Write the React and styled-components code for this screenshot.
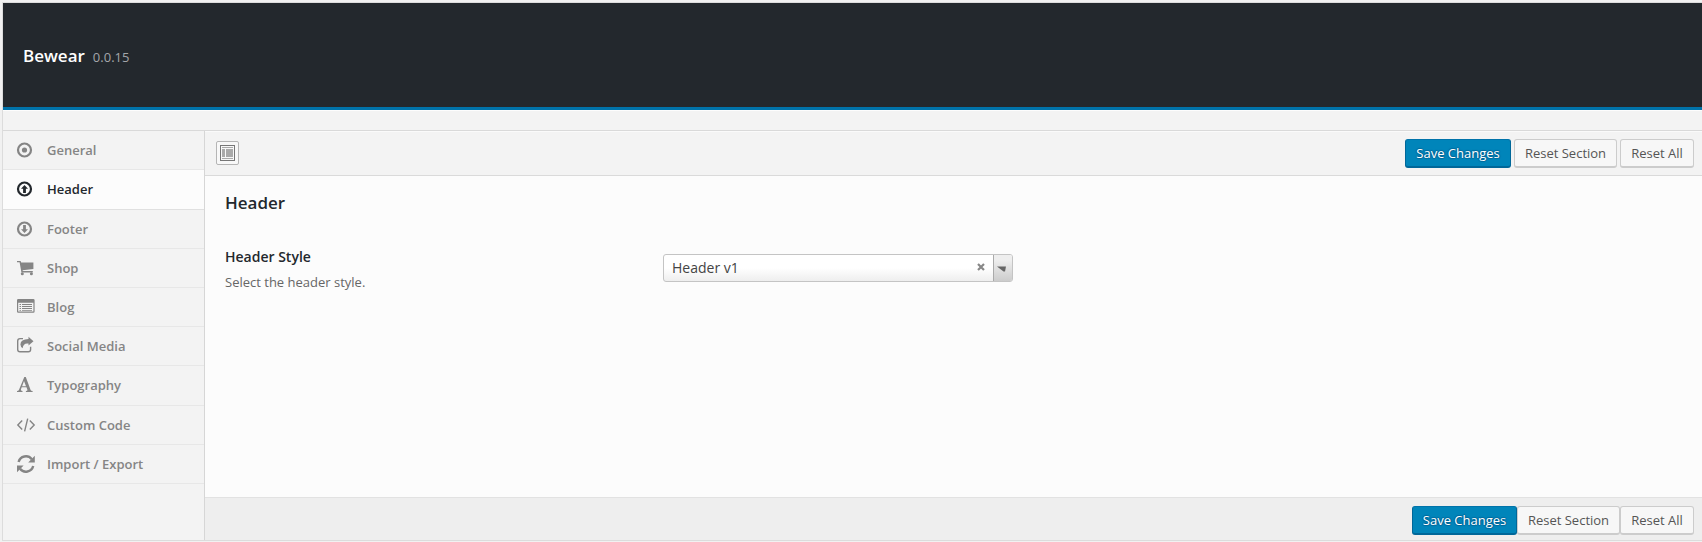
import React from "react";
import styled, { createGlobalStyle, css } from "styled-components";

const GlobalStyle = createGlobalStyle`
  * { box-sizing: border-box; }
  body { margin: 0; background: #f1f1f1; font-family: "Open Sans", sans-serif; color: #23282d; }
  button { font-family: inherit; }
`;

const Page = styled.div`
  height: 542px;
  padding: 2px 0 1px 2px;
  overflow: hidden;
`;

const Panel = styled.div`
  display: flex;
  flex-direction: column;
  height: 539px;
  border: 1px solid #dcdcdc;
  border-right: 0;
  background: #f3f3f3;
`;

const Masthead = styled.header`
  display: flex;
  align-items: baseline;
  flex: 0 0 107px;
  padding: 35px 20px 0;
  background: #23282d;
  border-bottom: 3px solid #0073aa;
`;

const Brand = styled.h1`
  margin: 0;
  font-size: 17px;
  line-height: 36px;
  font-weight: 600;
  color: #fff;
`;

const Version = styled.span`
  margin-left: 8px;
  font-size: 13px;
  color: #a3a6a9;
`;

const Strip = styled.div`
  flex: 0 0 21px;
  border-top: 1px solid #fdfdfd;
  border-bottom: 1px solid #d9d9d9;
`;

const Body = styled.div`
  display: flex;
  flex: 1;
`;

const Sidebar = styled.nav`
  flex: 0 0 202px;
  border-right: 1px solid #d6d6d6;
`;

const NavItem = styled.a`
  display: flex;
  align-items: flex-start;
  height: ${(p) => p.$height}px;
  padding: 9px 13px 0;
  border-bottom: 1px solid #e7e7e7;
  font-size: 13px;
  line-height: 20px;
  font-weight: 600;
  color: #858585;
  ${(p) => p.$active && css`
    background: #fcfcfc;
    color: #23282d;
    border-bottom-color: #e0e0e0;
  `}
`;

const NavIcon = styled.svg`
  flex: none;
  width: 20px;
  height: 20px;
  margin-right: 11px;
  fill: currentColor;
`;

const Main = styled.main`
  display: flex;
  flex-direction: column;
  flex: 1;
`;

const Toolbar = styled.div`
  display: flex;
  align-items: flex-start;
  justify-content: space-between;
  flex: 0 0 45px;
  padding: 7px 8px 0 11px;
  border-top: 1px solid #fafafa;
  border-bottom: 1px solid #dadada;
`;

const FooterBar = styled.div`
  display: flex;
  justify-content: flex-end;
  flex: 0 0 43px;
  padding: 8px 8px 0;
  background: #eee;
  border-top: 1px solid #e2e2e2;
`;

const ExpandButton = styled.button`
  display: flex;
  align-items: center;
  justify-content: center;
  width: 23px;
  height: 24px;
  margin-top: 2px;
  padding: 0;
  background: #f8f8f8;
  border: 1px solid #b5b5b5;
  border-radius: 2px;
`;

const Actions = styled.div`
  display: flex;
  gap: ${(p) => p.$gap}px;
`;

const Button = styled.button`
  width: ${(p) => p.$width}px;
  height: 29px;
  padding: 0;
  border: 1px solid #ccc;
  border-bottom-width: 2px;
  border-radius: 3px;
  background: #f7f7f7;
  font-size: 13px;
  line-height: 26px;
  white-space: nowrap;
  color: #555;
  ${(p) => p.$primary && css`
    background: #0085ba;
    border-color: #0073aa #006799 #006799;
    color: #fff;
    text-shadow: 0 -1px 1px #006799, 1px 0 1px #006799, 0 1px 1px #006799, -1px 0 1px #006799;
  `}
`;

const Content = styled.section`
  flex: 1;
  padding: 15px 20px 0;
  background: #fcfcfc;
`;

const Title = styled.h2`
  margin: 0;
  font-size: 17px;
  line-height: 23px;
  font-weight: 600;
`;

const Field = styled.div`
  display: flex;
  padding-top: 32px;
`;

const FieldInfo = styled.div`
  width: 438px;
  padding-top: 1px;
`;

const FieldLabel = styled.div`
  font-size: 14px;
  line-height: 19px;
  font-weight: 600;
`;

const FieldHint = styled.div`
  margin-top: 6px;
  font-size: 13px;
  line-height: 20px;
  color: #666;
`;

const Select = styled.div`
  display: flex;
  align-items: center;
  width: 350px;
  height: 28px;
  margin-top: 8px;
  padding-left: 8px;
  border: 1px solid #c4c4c4;
  border-radius: 3px;
  background: linear-gradient(#fff 50%, #eee);
  font-size: 14px;
  color: #444;
`;

const SelectValue = styled.span`
  flex: 1;
  line-height: 19px;
  padding-bottom: 1px;
`;

const SelectClear = styled.svg`
  width: 8px;
  height: 8px;
  margin: 0 8px 2px 0;
`;

const SelectArrow = styled.span`
  display: flex;
  align-items: center;
  width: 19px;
  height: 100%;
  padding: 1px 0 0 3px;
  border-left: 1px solid #aaa;
  border-radius: 0 2px 2px 0;
  background: linear-gradient(#eee 20%, #ccc);
`;

/* Every navigation glyph sits in a 20 x 20 box. */
const glyphs = {
  general: (
    <>
      <circle cx="8.5" cy="10" r="6.5" fill="none" stroke="currentColor" strokeWidth="2.2" />
      <circle cx="8.5" cy="10" r="2.6" />
    </>
  ),
  header: (
    <>
      <circle cx="8.5" cy="10" r="6.5" fill="none" stroke="currentColor" strokeWidth="2.2" />
      <path d="M8.5 6 12 9.8H9.9V14H7.1V9.8H5z" />
    </>
  ),
  footer: (
    <>
      <circle cx="8.5" cy="10" r="6.5" fill="none" stroke="currentColor" strokeWidth="2.2" />
      <path d="M8.5 14 12 10.2H9.9V6H7.1v4.2H5z" />
    </>
  ),
  shop: (
    <>
      <path d="M1 3h3.6l.6 1.5H17.4V11L6.6 12.3l.2.8h10V14.4H5.4L3.6 4.2H1z" />
      <circle cx="6.3" cy="15.7" r="1.5" />
      <circle cx="15.4" cy="15.7" r="1.5" />
    </>
  ),
  blog: (
    <g transform="translate(0 -1)">
      <path fillRule="evenodd" d="M2.3 3h15q1.300 0 1.300 1.300v11.200q0 1.300-1.300 1.300H2.300Q1 16.800 1 15.500V4.300Q1 3 2.300 3zM2.200 6.800v8.800h15.200V6.800z" />
      <path d="M3.500 8h1.500v1H3.500zM6 8h10v1H6zM3.500 10h1.500v1H3.500zM6 10h10v1H6zM3.500 12h1.500v1H3.500zM6 12h10v1H6zM3.500 14h1.500v.7H3.500zM6 14h10v.7H6z" />
    </g>
  ),
  social: (
    <g transform="translate(0 -.8)">
      <path d="M7 3.400H4Q1.700 3.400 1.700 5.700v8.500q0 2.300 2.300 2.300h8.300q2.300 0 2.300-2.300V11.500" fill="none" stroke="currentColor" strokeWidth="1.400" />
      <path d="M12.500 1.600 17.500 6l-5 4.400V8.300Q7.300 7.500 6.600 13 4.600 11.800 4.400 9.300 4.600 4 12.500 3.900z" />
    </g>
  ),
  typography: (
    <path fillRule="evenodd" d="M8.300 2h1.500l4.800 13q.4 1 2 1.100v1H9.900v-1q1.900-.1 1.500-1.300l-.9-2.500H5.700l-.8 2.300q-.4 1.300 1.600 1.500v1H1v-1q1.500-.2 2-1.400zM8 5.900 6.100 11.200H10z" />
  ),
  code: (
    <path d="M6.200 5.400 1.800 10l4.400 4.600M13.800 5.400 18.200 10l-4.400 4.600M11.700 3.700 8.600 16.300" fill="none" stroke="currentColor" strokeWidth="1.400" />
  ),
  sync: (
    <>
      <path d="M2.600 8A7.500 7.500 0 0 1 15.800 5.200M17.200 12A7.500 7.500 0 0 1 4 14.800" fill="none" stroke="currentColor" strokeWidth="2.400" />
      <path d="M18.800 1.800V8.400H12.200zM1 18.200V11.600H7.600z" />
    </>
  ),
};

const sections = [
  { label: "General", icon: "general", height: 39 },
  { label: "Header", icon: "header", height: 40, active: true },
  { label: "Footer", icon: "footer", height: 39 },
  { label: "Shop", icon: "shop", height: 39 },
  { label: "Blog", icon: "blog", height: 39 },
  { label: "Social Media", icon: "social", height: 39 },
  { label: "Typography", icon: "typography", height: 40 },
  { label: "Custom Code", icon: "code", height: 39 },
  { label: "Import / Export", icon: "sync", height: 39 },
];

function FormActions({ gap, widths }) {
  return (
    <Actions $gap={gap}>
      <Button $primary $width={widths[0]}>Save Changes</Button>
      <Button $width={widths[1]}>Reset Section</Button>
      <Button $width={widths[2]}>Reset All</Button>
    </Actions>
  );
}

export default function App() {
  return (
    <Page>
      <GlobalStyle />
      <Panel>
        <Masthead>
          <Brand>Bewear</Brand>
          <Version>0.0.15</Version>
        </Masthead>
        <Strip />
        <Body>
          <Sidebar>
            {sections.map((s) => (
              <NavItem key={s.label} $height={s.height} $active={s.active}>
                <NavIcon viewBox="0 0 20 20">{glyphs[s.icon]}</NavIcon>
                {s.label}
              </NavItem>
            ))}
          </Sidebar>
          <Main>
            <Toolbar>
              <ExpandButton aria-label="Expand">
                <svg width="15" height="16" viewBox="0 0 15 16">
                  <rect x=".5" y=".5" width="14" height="15" fill="#f8f8f8" stroke="#777" />
                  <path d="M2 2h11v1H2zM2 4h3v8H2zM6 4h7v8H6zM2 13h11v1H2z" fill="#aaa" />
                </svg>
              </ExpandButton>
              <FormActions gap={3} widths={[106, 103, 74]} />
            </Toolbar>
            <Content>
              <Title>Header</Title>
              <Field>
                <FieldInfo>
                  <FieldLabel>Header Style</FieldLabel>
                  <FieldHint>Select the header style.</FieldHint>
                </FieldInfo>
                <Select>
                  <SelectValue>Header v1</SelectValue>
                  <SelectClear viewBox="0 0 8 8">
                    <path d="M1 1l6 6M7 1L1 7" stroke="#888" strokeWidth="2.200" />
                  </SelectClear>
                  <SelectArrow>
                    <svg width="9" height="6" viewBox="0 0 9 6">
                      <path d="M0 .5h9L8 5.500H6.500z" fill="#666" />
                    </svg>
                  </SelectArrow>
                </Select>
              </Field>
            </Content>
            <FooterBar>
              <FormActions gap={0} widths={[105, 103, 74]} />
            </FooterBar>
          </Main>
        </Body>
      </Panel>
    </Page>
  );
}
